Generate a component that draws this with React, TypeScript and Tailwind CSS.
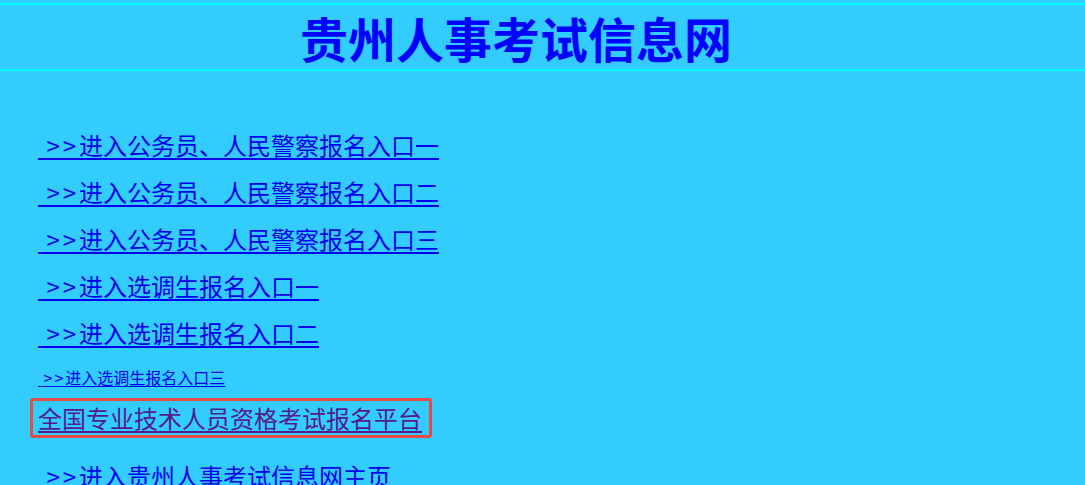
const links = [
  { text: "进入公务员、人民警察报名入口一", size: "big" },
  { text: "进入公务员、人民警察报名入口二", size: "big" },
  { text: "进入公务员、人民警察报名入口三", size: "big" },
  { text: "进入选调生报名入口一", size: "big" },
  { text: "进入选调生报名入口二", size: "big" },
  { text: "进入选调生报名入口三", size: "small" },
]

export default function App() {
  return (
    <div className="min-h-[485px] bg-[#33ccff] pt-[3px] font-['Noto_Sans_CJK_SC',sans-serif]">
      {/* 标题栏 */}
      <div className="border-y-2 border-[#00ffff]">
        <h1 className="flex h-[64px] items-center justify-center pr-[53px] text-[48px] font-bold leading-none text-[#0000ff]">
          贵州人事考试信息网
        </h1>
      </div>

      <div className="flex flex-col items-start pl-[38px] pt-[58px]">
        {links.map(({ text, size }) => (
          <a
            key={text}
            href="#"
            className={
              size === "big"
                ? "mb-[15px] whitespace-pre text-[24px] leading-[32px] text-[#0000ee] underline decoration-[2px] underline-offset-[3px]"
                : "mb-[11px] mt-[3px] whitespace-pre text-[16px] leading-[20px] text-[#0000ee] underline underline-offset-[2px]"
            }
          >
            <span className={size === "big" ? "tracking-[3px]" : "tracking-[2px]"}>{" >>"}</span>
            {text}
          </a>
        ))}

        <div className="-ml-[8px] rounded-[3px] border-[3px] border-[#e84a4a] py-[1px] pl-[5px] pr-[7px]">
          <a
            href="#"
            className="block text-[24px] leading-[32px] text-[#551a8b] underline decoration-[2px] underline-offset-[3px]"
          >
            全国专业技术人员资格考试报名平台
          </a>
        </div>

        <a href="#" className="mt-[22px] whitespace-pre text-[24px] leading-[32px] text-[#0000ee]">
          <span className="tracking-[3px]">{" >>"}</span>
          进入贵州人事考试信息网主页
        </a>
      </div>
    </div>
  )
}
